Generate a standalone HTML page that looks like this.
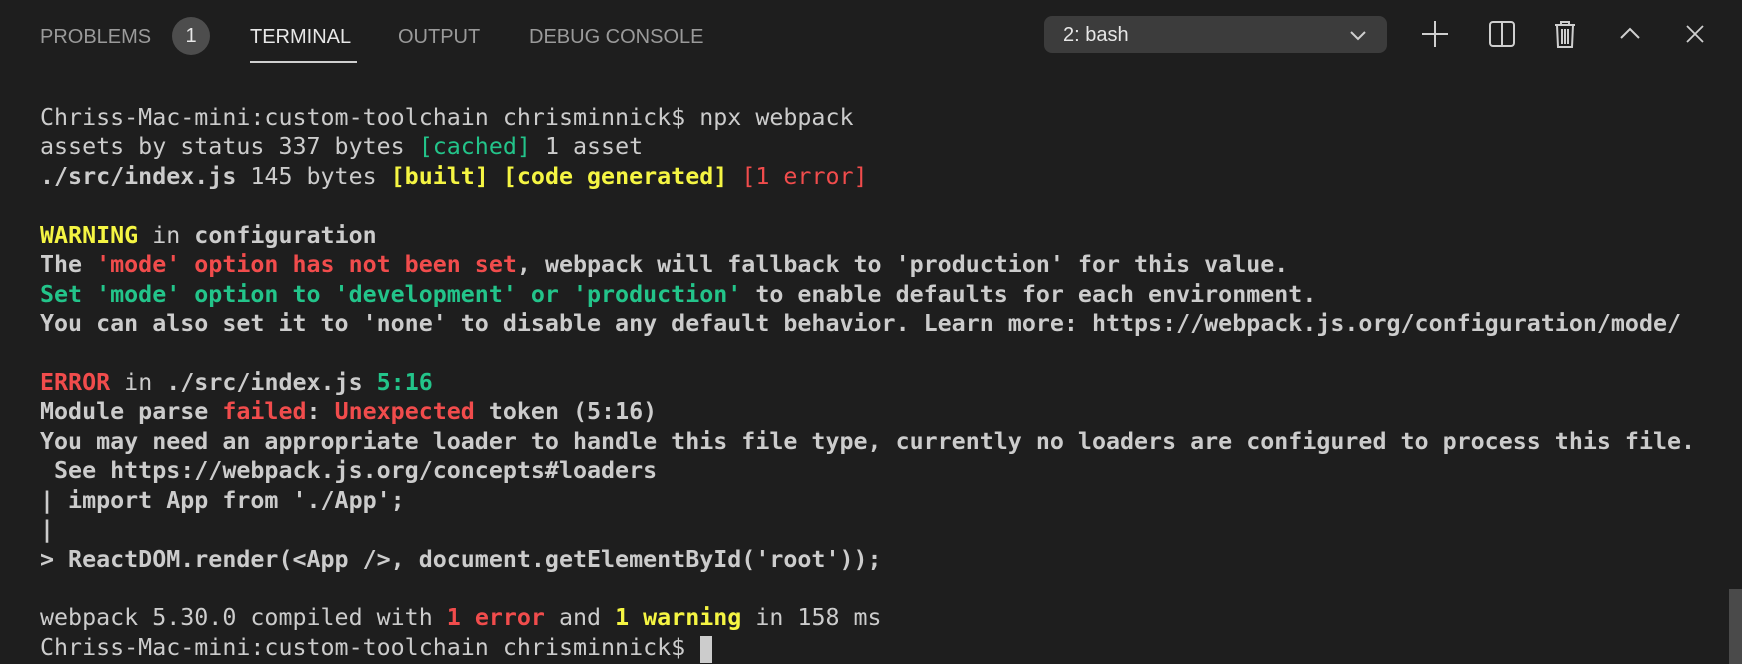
<!DOCTYPE html>
<html><head><meta charset="utf-8"><style>
html,body{margin:0;padding:0;background:#1e1e1e;width:1742px;height:664px;overflow:hidden;position:relative}
.tab{position:absolute;top:24px;font-family:"Liberation Sans",sans-serif;font-size:20px;color:#9a9a9a;line-height:26px}
.badge{position:absolute;left:172px;top:17px;width:38px;height:38px;border-radius:50%;background:#4d4d4d;color:#e8e8e8;font-family:"Liberation Sans",sans-serif;font-size:20px;text-align:center;line-height:38px}
.ul{position:absolute;left:250px;top:61px;width:107px;height:2px;background:#cfcfcf}
.dd{position:absolute;left:1044px;top:16px;width:343px;height:37px;border-radius:8px;background:#3c3c3c}
.dd span{position:absolute;left:19px;top:8px;font-family:"Liberation Sans",sans-serif;font-size:20px;color:#e6e6e6}
.term{position:absolute;left:40px;top:103px;font-family:"DejaVu Sans Mono","Liberation Mono",monospace;font-size:23.3px;line-height:29.44px;color:#cccccc;white-space:pre;font-weight:bold}
.n{font-weight:normal}
.r{color:#f14c4c}.g{color:#23c48a}.y{color:#f5f543}
.cursor{position:absolute;left:700px;top:636px;width:12px;height:27px;background:#cccccc}
.sb{position:absolute;left:1729px;top:589px;width:13px;height:75px;background:#4a4a4a}
svg{position:absolute}
</style></head><body>
<div class="tab" style="left:40px">PROBLEMS</div>
<div class="badge">1</div>
<div class="tab" style="left:250px;color:#e7e7e7">TERMINAL</div>
<div class="ul"></div>
<div class="tab" style="left:398px">OUTPUT</div>
<div class="tab" style="left:529px">DEBUG CONSOLE</div>
<div class="dd"><span>2: bash</span>
<svg style="left:306px;top:14px" width="16" height="12" viewBox="0 0 16 12"><path d="M1 2 L8 9 L15 2" stroke="#cfcfcf" stroke-width="2" fill="none"/></svg></div>
<svg style="left:1421px;top:20px" width="28" height="28" viewBox="0 0 28 28"><path d="M14 1V27M1 14H27" stroke="#cfcfcf" stroke-width="2"/></svg>
<svg style="left:1488px;top:20px" width="28" height="28" viewBox="0 0 28 28"><rect x="2" y="2" width="24" height="24" rx="3" stroke="#cfcfcf" stroke-width="2" fill="none"/><path d="M14 2V26" stroke="#cfcfcf" stroke-width="2"/></svg>
<svg style="left:1553px;top:19px" width="24" height="30" viewBox="0 0 24 30"><path d="M2 6H22M8 6V3H16V6M4 6L5 28H19L20 6M9 10V25M12 10V25M15 10V25" stroke="#cfcfcf" stroke-width="2" fill="none"/></svg>
<svg style="left:1619px;top:26px" width="22" height="14" viewBox="0 0 22 14"><path d="M2 12L11 3L20 12" stroke="#cfcfcf" stroke-width="2" fill="none"/></svg>
<svg style="left:1684px;top:23px" width="22" height="22" viewBox="0 0 22 22"><path d="M3 3L19 19M19 3L3 19" stroke="#cfcfcf" stroke-width="1.8"/></svg>
<div class="term"><span class="n">Chriss-Mac-mini:custom-toolchain chrisminnick$ npx webpack</span>
<span class="n">assets by status 337 bytes <span class="g">[cached]</span> 1 asset</span>
./src/index.js <span class="n">145 bytes</span> <span class="y">[built]</span> <span class="y">[code generated]</span> <span class="r n">[1 error]</span>

<span class="y">WARNING</span> <span class="n">in</span> configuration
The <span class="r">'mode' option has not been set</span>, webpack will fallback to 'production' for this value.
<span class="g">Set 'mode' option to 'development' or 'production'</span> to enable defaults for each environment.
You can also set it to 'none' to disable any default behavior. Learn more: https://webpack.js.org/configuration/mode/

<span class="r">ERROR</span> <span class="n">in</span> ./src/index.js <span class="g">5:16</span>
Module parse <span class="r">failed</span>: <span class="r">Unexpected</span> token (5:16)
You may need an appropriate loader to handle this file type, currently no loaders are configured to process this file.
 See https://webpack.js.org/concepts#loaders
| import App from './App';
|
&gt; ReactDOM.render(&lt;App /&gt;, document.getElementById('root'));

<span class="n">webpack 5.30.0 compiled with <b class="r">1 error</b> and <b class="y">1 warning</b> in 158 ms</span>
<span class="n">Chriss-Mac-mini:custom-toolchain chrisminnick$</span></div>
<div class="cursor"></div>
<div class="sb"></div>
</body></html>
